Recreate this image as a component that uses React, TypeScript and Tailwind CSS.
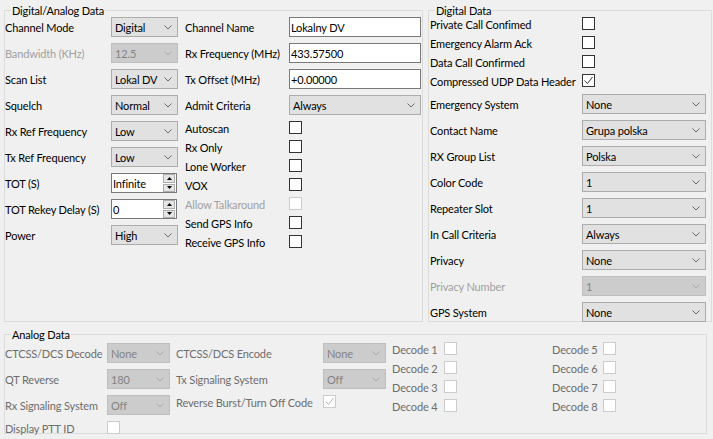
import React from "react";

function Chevron({ disabled }: { disabled?: boolean }) {
  return (
    <svg width="8" height="5" viewBox="0 0 8 5" className="mr-[5px] shrink-0">
      <polyline
        points="0.5,0.5 4,4 7.5,0.5"
        fill="none"
        stroke={disabled ? "#a8a8a8" : "#6a6a6a"}
        strokeWidth="1"
      />
    </svg>
  );
}

function Combo({ value, w, disabled }: { value: string; w: string; disabled?: boolean }) {
  return (
    <div
      className={`flex h-[20px] items-center border pl-[3px] ${w} ${
        disabled
          ? "border-[#bfbfbf] bg-[#cccccc] text-[#838383]"
          : "border-[#acacac] bg-[#e1e1e1] text-black"
      }`}
    >
      <span className="mt-[2px] flex-1 truncate">{value}</span>
      <Chevron disabled={disabled} />
    </div>
  );
}

function TextBox({ value, w }: { value: string; w: string }) {
  return (
    <div className={`flex h-[20px] items-center border border-[#7a7a7a] bg-white pl-[1px] ${w}`}>
      <span className="mt-[2px]">{value}</span>
    </div>
  );
}

function Spin({ value }: { value: string }) {
  return (
    <div className="flex h-[20px] w-[66px] items-center border border-[#7a7a7a] bg-white pl-[1px]">
      <span className="mt-[2px] flex-1">{value}</span>
      <div className="mr-[1px] flex h-[18px] w-[12px] flex-col gap-[1px]">
        <div className="flex flex-1 items-center justify-center border border-[#adadad] bg-[#e5e5e5]">
          <svg width="5" height="3" viewBox="0 0 5 3">
            <polygon points="0,3 2.5,0 5,3" fill="#000" />
          </svg>
        </div>
        <div className="flex flex-1 items-center justify-center border border-[#adadad] bg-[#e5e5e5]">
          <svg width="5" height="3" viewBox="0 0 5 3">
            <polygon points="0,0 2.5,3 5,0" fill="#000" />
          </svg>
        </div>
      </div>
    </div>
  );
}

function Check({ checked, disabled }: { checked?: boolean; disabled?: boolean }) {
  return (
    <div
      className={`flex h-[13px] w-[13px] shrink-0 items-center justify-center border bg-white ${
        disabled ? "border-[#cccccc]" : "border-[#333333]"
      }`}
    >
      {checked && (
        <svg width="11" height="11" viewBox="0 0 11 11">
          <polyline
            points="1.5,5.5 4.5,8.5 9.5,2"
            fill="none"
            stroke={disabled ? "#b5b5b5" : "#333333"}
            strokeWidth="1"
          />
        </svg>
      )}
    </div>
  );
}

function Group({ title, className, children }: { title: string; className: string; children: React.ReactNode }) {
  return (
    <div className={`relative border border-[#dcdcdc] ${className}`}>
      <div className="absolute left-[6px] -top-[8px] h-[15px] bg-[#f0f0f0] px-[1px] pt-[1px] leading-[14px] text-black">
        {title}
      </div>
      {children}
    </div>
  );
}

function Label({ text, w, dis }: { text: string; w: string; dis?: boolean }) {
  return <span className={`mt-[2px] whitespace-nowrap ${w} ${dis ? "text-[#a0a0a0]" : ""}`}>{text}</span>;
}

export default function App() {
  const leftA: [string, React.ReactNode, boolean?][] = [
    ["Channel Mode", <Combo value="Digital" w="w-[67px]" />],
    ["Bandwidth (KHz)", <Combo value="12.5" w="w-[67px]" disabled />, true],
    ["Scan List", <Combo value="Lokal DV" w="w-[67px]" />],
    ["Squelch", <Combo value="Normal" w="w-[67px]" />],
    ["Rx Ref Frequency", <Combo value="Low" w="w-[67px]" />],
    ["Tx Ref Frequency", <Combo value="Low" w="w-[67px]" />],
    ["TOT (S)", <Spin value="Infinite" />],
    ["TOT Rekey Delay (S)", <Spin value="0" />],
    ["Power", <Combo value="High" w="w-[67px]" />],
  ];
  const leftB1: [string, React.ReactNode][] = [
    ["Channel Name", <TextBox value="Lokalny DV" w="w-[132px]" />],
    ["Rx Frequency (MHz)", <TextBox value="433.57500" w="w-[132px]" />],
    ["Tx Offset (MHz)", <TextBox value="+0.00000" w="w-[132px]" />],
    ["Admit Criteria", <Combo value="Always" w="w-[132px]" />],
  ];
  const leftB2: [string, boolean?][] = [
    ["Autoscan"],
    ["Rx Only"],
    ["Lone Worker"],
    ["VOX"],
    ["Allow Talkaround", true],
    ["Send GPS Info"],
    ["Receive GPS Info"],
  ];
  const rightChecks: [string, boolean?][] = [
    ["Private Call Confimed"],
    ["Emergency Alarm Ack"],
    ["Data Call Confirmed"],
    ["Compressed UDP Data Header", true],
  ];
  const rightCombos: [string, string, boolean?][] = [
    ["Emergency System", "None"],
    ["Contact Name", "Grupa polska"],
    ["RX Group List", "Polska"],
    ["Color Code", "1"],
    ["Repeater Slot", "1"],
    ["In Call Criteria", "Always"],
    ["Privacy", "None"],
    ["Privacy Number", "1", true],
    ["GPS System", "None"],
  ];

  return (
    <div className="relative h-[439px] w-[713px] overflow-hidden bg-[#f0f0f0] font-['Lato',sans-serif] text-[11px] leading-[14px] tracking-[-0.15px] text-black">
      <div className="flex pt-[10px] pl-[4px]">
        <Group title="Digital/Analog Data" className="h-[312px] w-[419px]">
          <div className="flex pt-[3px]">
            <div className="flex w-[173px] flex-col">
              {leftA.map(([l, c, dis], i) => (
                <div key={i} className="flex h-[26px] items-center">
                  <Label text={l} w="w-[106px]" dis={dis} />
                  {c}
                </div>
              ))}
            </div>
            <div className="ml-[7px] flex flex-col">
              {leftB1.map(([l, c], i) => (
                <div key={i} className="flex h-[26px] items-center">
                  <Label text={l} w="w-[104px]" />
                  {c}
                </div>
              ))}
              {leftB2.map(([l, dis], i) => (
                <div key={i} className="flex h-[19px] items-center">
                  <Label text={l} w="w-[104px]" dis={dis} />
                  <Check disabled={dis} />
                </div>
              ))}
            </div>
          </div>
        </Group>
        <Group title="Digital Data" className="ml-[5px] h-[312px] w-[284px]">
          <div className="flex flex-col pt-[3px] pl-[1px]">
            {rightChecks.map(([l, ch], i) => (
              <div key={i} className="flex h-[19px] items-center">
                <Label text={l} w="w-[152px]" />
                <Check checked={ch} />
              </div>
            ))}
            <div className="h-[1px]" />
            {rightCombos.map(([l, v, dis], i) => (
              <div key={i} className="flex h-[26px] items-center">
                <Label text={l} w="w-[152px]" dis={dis} />
                <Combo value={v} w="w-[124px]" disabled={dis} />
              </div>
            ))}
          </div>
        </Group>
      </div>
      <div className="pt-[12px] pl-[4px]">
        <Group title="Analog Data" className="h-[100px] w-[703px]">
          <div className="flex text-[#6d6d6d]">
            <div className="flex w-[165px] flex-col pt-[5px]">
              <div className="flex h-[26px] items-center">
                <Label text="CTCSS/DCS Decode" w="w-[102px]" />
                <Combo value="None" w="w-[63px]" disabled />
              </div>
              <div className="flex h-[26px] items-center">
                <Label text="QT Reverse" w="w-[102px]" />
                <Combo value="180" w="w-[63px]" disabled />
              </div>
              <div className="flex h-[26px] items-center">
                <Label text="Rx Signaling System" w="w-[102px]" />
                <Combo value="Off" w="w-[63px]" disabled />
              </div>
              <div className="flex h-[19px] items-center">
                <Label text="Display PTT ID" w="w-[102px]" />
                <Check disabled />
              </div>
            </div>
            <div className="ml-[6px] flex w-[210px] flex-col pt-[5px]">
              <div className="flex h-[26px] items-center">
                <Label text="CTCSS/DCS Encode" w="w-[147px]" />
                <Combo value="None" w="w-[63px]" disabled />
              </div>
              <div className="flex h-[26px] items-center">
                <Label text="Tx Signaling System" w="w-[147px]" />
                <Combo value="Off" w="w-[63px]" disabled />
              </div>
              <div className="flex h-[19px] items-center">
                <Label text="Reverse Burst/Turn Off Code" w="w-[147px]" />
                <Check checked disabled />
              </div>
            </div>
            <div className="ml-[6px] flex w-[65px] flex-col pt-[4px]">
              {["Decode 1", "Decode 2", "Decode 3", "Decode 4"].map((l) => (
                <div key={l} className="flex h-[19px] items-center">
                  <Label text={l} w="w-[52px]" />
                  <Check disabled />
                </div>
              ))}
            </div>
            <div className="ml-[95px] flex flex-col pt-[4px]">
              {["Decode 5", "Decode 6", "Decode 7", "Decode 8"].map((l) => (
                <div key={l} className="flex h-[19px] items-center">
                  <Label text={l} w="w-[51px]" />
                  <Check disabled />
                </div>
              ))}
            </div>
          </div>
        </Group>
      </div>
    </div>
  );
}
